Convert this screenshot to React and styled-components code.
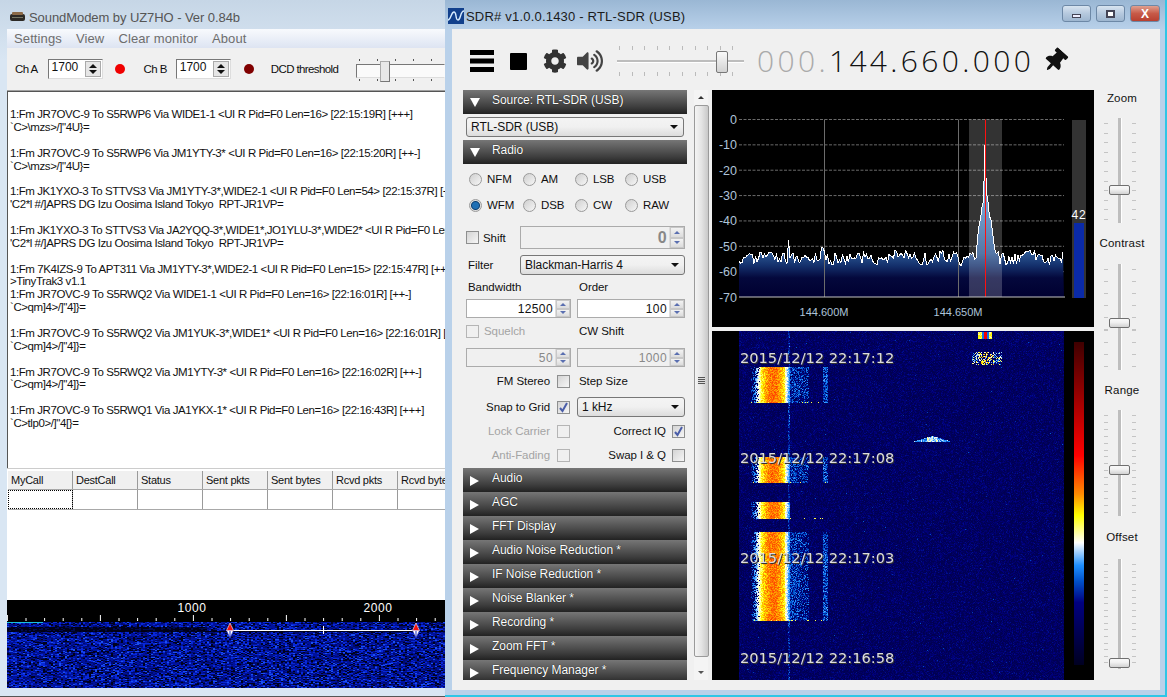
import { useEffect, useRef } from 'react';
import styled, { createGlobalStyle, css } from 'styled-components';
import { FaCog, FaVolumeUp, FaThumbtack } from 'react-icons/fa';

const GlobalStyle = createGlobalStyle`
  html, body { margin: 0; padding: 0; background: #b9d1ea; overflow: hidden; }
  * { box-sizing: border-box; }
  body { font-family: "Liberation Sans", Arial, sans-serif; font-size: 12px; color: #111; }
`;

/* helpers for the generated noise pictures */
const rng = (seed) => () => {
  seed |= 0; seed = (seed + 0x6d2b79f5) | 0;
  let t = Math.imul(seed ^ (seed >>> 15), 1 | seed);
  t = (t + Math.imul(t ^ (t >>> 7), 61 | t)) ^ t;
  return ((t ^ (t >>> 14)) >>> 0) / 4294967296;
};

const STOPS = [
  [0, [0, 0, 32]], [0.195, [0, 0, 128]], [0.26, [0, 80, 200]], [0.31, [30, 144, 255]],
  [0.38, [255, 255, 255]], [0.465, [255, 255, 0]], [0.53, [255, 140, 0]], [0.65, [255, 0, 0]],
  [0.85, [144, 0, 0]], [1, [64, 0, 0]],
];

const colorAt = (v) => {
  const c = Math.max(0, Math.min(1, v));
  for (let i = 1; i < STOPS.length; i++) {
    if (c <= STOPS[i][0]) {
      const [a, ca] = STOPS[i - 1];
      const [b, cb] = STOPS[i];
      const k = (c - a) / (b - a);
      return ca.map((n, j) => Math.round(n + (cb[j] - n) * k));
    }
  }
  return [64, 0, 0];
};

const BURSTS = [
  { y0: 36, y1: 72, full: true },
  { y0: 126, y1: 152, full: true },
  { y0: 171, y1: 188, full: false },
  { y0: 201, y1: 290, full: true },
];

const drawWaterfall = (ctx, w, h) => {
  const r = rng(1430);
  ctx.fillStyle = '#000';
  ctx.fillRect(0, 0, w, h);
  const img = ctx.createImageData(w, h);
  for (let y = 0; y < h; y++) {
    for (let x = 0; x < w; x++) {
      let rgb = [0, 0, 0];
      if (x >= 27 && x < 352) {
        const n = r();
        let v = 0.1 + n * n * 0.11;
        if (r() > 0.996) v += 0.06;
        if (x === 77 || x === 76) v += r() * 0.1 + 0.03;
        BURSTS.forEach((b) => {
          if (y < b.y0 || y >= b.y1) return;
          const a = x + 712;
          if (a >= 761 && a < 785) v = 0.41 + 0.1 * Math.sin(((a - 761) / 24) * Math.PI) + r() * 0.09;
          else if (a >= 751 && a < 761) v = r() < (a - 749) / 11 ? 0.22 + ((a - 751) / 9) * 0.17 + r() * 0.06 : v;
          else if (a >= 785 && a < 790) v = 0.37 - (a - 785) * 0.025 + r() * 0.07;
          else if (b.full && a >= 790 && a < 809) v = r() < 0.82 - (a - 790) * 0.02 ? 0.18 + r() * 0.14 : v;
          else if (b.full && a >= 823 && a < 828) v = r() < 0.8 ? 0.2 + r() * 0.13 : v;
          if (y === b.y1 - 1 && a >= 750 && a < 828 && r() < 0.15) v = 0.44;
        });
        const a = x + 712;
        if (y < 8 && a >= 978 && a < 992) {
          const band = a - 978;
          v = band < 4 || band > 10 ? 0.4 + r() * 0.08 : band < 6 || band > 8 ? 0.29 : 0.66;
          if (y < 1) v = 0.15;
        }
        if (y >= 21 && y < 34 && a >= 972 && a < 1002 && r() < 0.5) {
          v = 0.25 + r() * 0.2 + (a > 978 && a < 994 ? 0.08 : 0);
        }
        const dome = 4.5 - Math.abs(a - 932) / 3.4;
        if (y >= 104 && y < 111 && 111 - y < dome + 2 && a >= 914 && a < 950) {
          v = 0.26 + r() * 0.11 + (Math.abs(a - 932) < 6 ? 0.05 : 0);
        }
        rgb = colorAt(v);
      }
      if (x >= 362 && x < 372 && y >= 11 && y < 334) {
        rgb = colorAt(1 - (y - 11) / 323);
      }
      const i = (y * w + x) * 4;
      img.data[i] = rgb[0];
      img.data[i + 1] = rgb[1];
      img.data[i + 2] = rgb[2];
      img.data[i + 3] = 255;
    }
  }
  ctx.putImageData(img, 0, 0);
};

const drawAudioFall = (ctx, w, h) => {
  const r = rng(84);
  for (let y = 0; y < h; y++) {
    for (let x = 0; x < w; x += 2) {
      const n = r();
      let c = '#00129c';
      if (n < 0.2) c = '#00021e';
      else if (n < 0.42) c = '#000a70';
      else if (n > 0.93) c = '#1c50f0';
      else if (n > 0.74) c = '#0828d8';
      if (y === 0 && x < 35) c = '#18c0e0';
      if (y >= 5 && y < 9 && x < 200) c = n > 0.7 ? '#000a50' : '#000018';
      if (y === 9) c = n > 0.5 ? '#000010' : '#000428';
      ctx.fillStyle = c;
      ctx.fillRect(x, y, 2, 1);
    }
  }
};

const NoisePicture = ({ width, height, draw, className }) => {
  const ref = useRef(null);
  useEffect(() => {
    draw(ref.current.getContext('2d'), width, height);
  }, [width, height, draw]);
  return <canvas ref={ref} width={width} height={height} className={className} />;
};

const Desktop = styled.div`
  display: flex;
  width: 1167px;
  height: 697px;
  overflow: hidden;
`;

/* ------- SoundModem window ------- */
const ModemWindow = styled.div`
  width: 445px;
  height: 697px;
  flex: none;
  display: flex;
  flex-direction: column;
  padding-left: 7px;
  background: linear-gradient(#c6d6e6, #d9e6f3 60px, #d9e6f3);
  border-bottom: 1px solid #555;
  overflow: hidden;
`;

const ModemTitle = styled.div`
  height: 29px;
  margin-left: -7px;
  padding: 5px 0 0 10px;
  display: flex;
  align-items: center;
  gap: 4px;
  font-size: 13px;
  letter-spacing: -0.07px;
  color: #555;
  flex: none;
`;

const ModemMenu = styled.div`
  height: 19px;
  display: flex;
  gap: 14px;
  padding-left: 7px;
  align-items: center;
  font-size: 13px;
  letter-spacing: 0.12px;
  color: #6d6d6d;
  background: linear-gradient(#f8fafd, #dde4f2);
  flex: none;
`;

const ModemBar = styled.div`
  height: 43px;
  background: #f0f0f0;
  display: flex;
  align-items: center;
  flex: none;
  position: relative;
  border-bottom: 1px solid #a0a0a0;
`;

const BarLabel = styled.span`
  font-size: 11.5px;
  letter-spacing: -0.6px;
  margin-left: ${(p) => p.$left}px;
`;

const ChannelInput = styled.div`
  width: 55px;
  height: 20px;
  margin-left: ${(p) => p.$left}px;
  background: #fff;
  border: 1px solid;
  border-color: #777 #ddd #ddd #777;
  display: flex;
  justify-content: space-between;
  font-size: 12px;
  padding: 0 0 0 3px;
  line-height: 15px;
`;

const ArrowPair = styled.div`
  width: 16px;
  margin: 1px 1px 1px 0;
  background: #e6e6e6;
  border: 1px solid #aaa;
  display: flex;
  flex-direction: column;
  align-items: center;
  justify-content: space-evenly;
`;

const Arrow = styled.i`
  width: 0;
  height: 0;
  border-left: ${(p) => p.$size || 4}px solid transparent;
  border-right: ${(p) => p.$size || 4}px solid transparent;
  ${(p) => (p.$down
    ? css`border-top: ${p.$size || 4}px solid ${p.$color || '#111'};`
    : css`border-bottom: ${p.$size || 4}px solid ${p.$color || '#111'};`)}
`;

const Led = styled.span`
  width: 10px;
  height: 10px;
  border-radius: 50%;
  margin-left: ${(p) => p.$left}px;
  background: ${(p) => p.$color};
`;

const DcdSlider = styled.div`
  position: absolute;
  left: 349px;
  right: 0;
  top: 11px;
  height: 22px;
  background:
    repeating-linear-gradient(to right, #555 0 1px, transparent 1px 18px) 3px 0 / 100% 2px no-repeat,
    repeating-linear-gradient(to right, #555 0 1px, transparent 1px 18px) 3px 20px / 100% 2px no-repeat;

  &::before {
    content: '';
    position: absolute;
    left: 0;
    right: 0;
    top: 5px;
    height: 12px;
    background: #fafafa;
    border: 1px solid;
    border-color: #777 transparent #ddd #777;
  }
  &::after {
    content: '';
    position: absolute;
    left: 24px;
    top: 2px;
    width: 8px;
    height: 19px;
    background: #e8e8e8;
    border: 1px solid #aaa;
    border-right-color: #777;
    border-bottom-color: #777;
  }
`;

const Monitor = styled.div`
  height: 377px;
  background: #fff;
  border: 1px solid #555;
  border-width: 1px 0 0 1px;
  padding: 16px 0 0 2px;
  font-size: 11.5px;
  line-height: 12.87px;
  letter-spacing: -0.42px;
  white-space: pre;
  overflow: hidden;
  flex: none;
`;

const PeerGrid = styled.div`
  height: 132px;
  background: #fff;
  padding-top: 2px;
  flex: none;
  border-top: 1px solid #ccc;
`;

const PeerRow = styled.div`
  display: grid;
  grid-template-columns: repeat(7, 65px);
  height: ${(p) => p.$height}px;
  margin-left: 1px;
  ${(p) => p.$head && css`background: #f0f0f0;`}
  border-bottom: 1px solid #a8a8a8;
`;

const PeerCell = styled.div`
  border-right: 1px solid #9a9a9a;
  padding: 3px 0 0 3px;
  font-size: 11px;
  letter-spacing: -0.25px;
  overflow: hidden;
  white-space: nowrap;
  ${(p) => p.$focus && css`outline: 1px dotted #000; outline-offset: -1px;`}
`;

const Ruler = styled.svg`
  display: block;
  flex: none;
  background: #000;
`;

const RulerText = styled.text`
  font-size: 12px;
  letter-spacing: 0.6px;
  fill: #fff;
`;

const AudioFall = styled.div`
  position: relative;
  height: 66px;
  flex: none;
  canvas { display: block; }
`;

const TuneMarks = styled.svg`
  position: absolute;
  left: 0;
  top: 0;
`;

const ModemFooter = styled.div`
  flex: 1;
  background: #d9e6f3;
`;

/* ------- SDR# window ------- */
const SdrWindow = styled.div`
  width: 722px;
  height: 697px;
  flex: none;
  display: flex;
  flex-direction: column;
  padding: 0 2px 2px 7px;
  position: relative;
  background: linear-gradient(#9ab7d4, #b9d1ea 30px);
  border-bottom: 2px solid #2fc6e6;
  border-right: 0;
  box-shadow: inset -2px 0 0 #2fc6e6;
`;

const SdrTitle = styled.div`
  height: 29px;
  display: flex;
  align-items: center;
  margin-left: -4px;
  padding-top: 3px;
  gap: 2px;
  font-size: 13px;
  letter-spacing: 0.2px;
  color: #1b1b1b;
  flex: none;
`;

const Caption = styled.div`
  margin-left: auto;
  margin-right: 5px;
  display: flex;
  gap: 5px;
  padding-bottom: 5px;
`;

const CaptionButton = styled.div`
  width: ${(p) => (p.$close ? 30 : 29)}px;
  height: 17px;
  border: 1px solid #6d88a6;
  border-radius: 3px;
  display: flex;
  align-items: center;
  justify-content: center;
  color: #fff;
  font-weight: bold;
  font-size: 12px;
  background: ${(p) => (p.$close
    ? 'linear-gradient(#e0a090, #c75a48 50%, #b84030)'
    : 'linear-gradient(#d8e4f0, #b6c9de 50%, #9eb6d0)')};
`;

const MinGlyph = styled.i`
  width: 9px;
  height: 4px;
  margin-top: 4px;
  background: #eef;
  border: 1px solid #445;
`;

const MaxGlyph = styled.i`
  width: 9px;
  height: 8px;
  background: #fff;
  border: 2px solid #445;
`;

const SdrClient = styled.div`
  width: 708px;
  height: 661px;
  background: #f0f0f0;
  display: flex;
  flex-direction: column;
  flex: none;
`;

const SdrBar = styled.div`
  height: 61px;
  flex: none;
  display: flex;
  align-items: center;
  padding: 3px 0 0 18px;
`;

const ToolIcon = styled.span`
  display: flex;
  margin-left: ${(p) => p.$left}px;
  color: ${(p) => p.$color};
`;

const VolumeSlider = styled.div`
  position: relative;
  width: 127px;
  height: 30px;
  margin-left: 14px;
  background:
    repeating-linear-gradient(to right, #bbb 0 1px, transparent 1px 12.6px) 2px 0 / 100% 4px no-repeat,
    repeating-linear-gradient(to right, #bbb 0 1px, transparent 1px 12.6px) 2px 26px / 100% 4px no-repeat;

  &::before {
    content: '';
    position: absolute;
    left: 0;
    right: 0;
    top: 14px;
    height: 2px;
    background: #bdbdbd;
    border-bottom: 1px solid #fff;
  }
  &::after {
    content: '';
    position: absolute;
    left: 99px;
    top: 5px;
    width: 10px;
    height: 20px;
    border: 1px solid #777;
    border-radius: 2px;
    background: linear-gradient(#fafafa, #d2d2d2);
  }
`;

const Frequency = styled.div`
  margin-left: 13px;
  font-family: "Open Sans", sans-serif;
  font-weight: 300;
  font-size: 30px;
  letter-spacing: 3.35px;
  line-height: 36px;
  color: #111;
  white-space: pre;
  span { color: #aaa; }
`;

const PinIcon = styled(FaThumbtack)`
  margin-left: 9px;
  width: 24px;
  height: 24px;
  transform: rotate(42deg);
  color: #111;
`;

const SdrMain = styled.div`
  display: flex;
  height: 590px;
  flex: none;
  padding-left: 11px;
`;

const SidePanel = styled.div`
  width: 224px;
  flex: none;
  overflow: hidden;
`;

const PanelHead = styled.div`
  height: 24px;
  display: flex;
  align-items: center;
  padding: 0 0 5px 29px;
  position: relative;
  font-size: 12px;
  letter-spacing: -0.05px;
  color: #fff;
  background: linear-gradient(#767676, #3e3e3e 70%, #222);
  text-shadow: 0 0 1px #000;
  &::before {
    content: '';
    position: absolute;
    left: 7px;
    top: 8px;
    ${(p) => (p.$open
    ? css`border-left: 5px solid transparent; border-right: 5px solid transparent; border-top: 9px solid #fff;`
    : css`border-top: 5px solid transparent; border-bottom: 5px solid transparent; border-left: 9px solid #fff;`)}
  }
`;

const DropDown = styled.div`
  width: ${(p) => p.$width}px;
  height: ${(p) => p.$height || 20}px;
  border: 1px solid #777;
  border-radius: 3px;
  margin-left: ${(p) => p.$left || 0}px;
  display: flex;
  align-items: center;
  justify-content: space-between;
  padding: 0 5px 0 4px;
  font-size: 12px;
  letter-spacing: -0.05px;
  background: linear-gradient(#f4f4f4, #f0f0f0 50%, #dcdcdc);
  flex: none;
`;

const SourceBody = styled.div`
  height: 26px;
  padding: 3px 0 0 3px;
`;

const RadioForm = styled.div`
  display: grid;
  grid-template-columns: 54px 52px 50px 60px;
  grid-auto-rows: 26px;
  margin: 2px 0 8px 6px;
`;

const RadioItem = styled.label`
  display: flex;
  align-items: center;
  gap: 5px;
  letter-spacing: -0.1px;
  font-size: 11.5px;
`;

const RadioDot = styled.i`
  width: 13px;
  height: 13px;
  border-radius: 50%;
  border: 1px solid #9a9a9a;
  flex: none;
  background: ${(p) => (p.$on
    ? 'radial-gradient(circle, #1f6fb4 0 3px, #0d3f72 4px, #ddd 5px)'
    : 'linear-gradient(135deg, #cfcfcf, #f6f6f6)')};
`;

const FormRow = styled.div`
  display: flex;
  align-items: center;
  height: ${(p) => p.$height}px;
  margin-top: ${(p) => p.$top || 0}px;
  padding-left: ${(p) => p.$left ?? 3}px;
`;

const Half = styled.div`
  width: ${(p) => p.$width}px;
  flex: none;
  display: flex;
  align-items: center;
  justify-content: ${(p) => (p.$end ? 'flex-end' : 'flex-start')};
  gap: ${(p) => p.$gap ?? 7}px;
`;

const FieldLabel = styled.span`
  font-size: 11.5px;
  letter-spacing: -0.05px;
  white-space: nowrap;
  color: ${(p) => (p.$off ? '#a4a4a4' : '#111')};
  margin-left: ${(p) => p.$left || 0}px;
`;

const CheckBox = styled.span`
  width: 13px;
  height: 13px;
  flex: none;
  border: 1px solid #8e8f8f;
  background: ${(p) => (p.$off ? '#f0f0f0' : 'linear-gradient(135deg, #d4d4d4, #f6f6f6)')};
  display: flex;
  align-items: center;
  justify-content: center;
  ${(p) => p.$off && css`border-color: #b5b5b5;`}
  svg { display: block; }
`;

const NumberBox = styled.div`
  width: ${(p) => p.$width}px;
  height: ${(p) => p.$height || 19}px;
  border: 1px solid #ababab;
  background: ${(p) => (p.$off ? '#f0f0f0' : '#fff')};
  display: flex;
  align-items: center;
  justify-content: flex-end;
  font-size: ${(p) => p.$size || 12}px;
  font-weight: ${(p) => (p.$bold ? 'bold' : 'normal')};
  letter-spacing: 0.4px;
  color: ${(p) => (p.$off ? '#888' : '#111')};
  margin-left: ${(p) => p.$left || 0}px;
  flex: none;
`;

const SpinPair = styled.div`
  width: 15px;
  height: 100%;
  margin-left: 2px;
  display: flex;
  flex-direction: column;
  border-left: 1px solid #ddd;
`;

const SpinButton = styled.div`
  flex: 1;
  display: flex;
  align-items: center;
  justify-content: center;
  background: linear-gradient(#f2f2f2, #dcdcdc);
  border: 1px solid #c8c8c8;
`;

const PanelGap = styled.div`
  height: 6px;
`;

const ScrollBar = styled.div`
  width: 14px;
  margin-left: 7px;
  flex: none;
  display: flex;
  flex-direction: column;
  align-items: center;
  justify-content: space-between;
  background: #f4f4f4;
  padding: 6px 0 6px;
`;

const ScrollThumb = styled.div`
  flex: 1;
  width: 15px;
  margin: 6px 0 14px;
  border: 1px solid #9a9a9a;
  border-radius: 2px;
  background: linear-gradient(to right, #f4f4f4, #e4e4e4 50%, #c8c8c8);
  display: flex;
  align-items: center;
  justify-content: center;
`;

const Grip = styled.i`
  width: 7px;
  height: 7px;
  margin-bottom: 2px;
  background: repeating-linear-gradient(#555 0 1px, #ddd 1px 2px);
`;

const Display = styled.div`
  width: 382px;
  margin-left: 4px;
  flex: none;
  display: flex;
  flex-direction: column;
  gap: 4px;
`;

const SpectrumBox = styled.svg`
  display: block;
  background: #000;
  flex: none;
`;

const AxisText = styled.text`
  font-family: "Liberation Sans", sans-serif;
  font-size: ${(p) => p.$size}px;
  fill: #aec3d9;
`;

const MeterText = styled.text`
  font-family: "Liberation Sans", sans-serif;
  font-size: 12px;
  letter-spacing: 0.8px;
  fill: #fff;
`;

const WaterBox = styled.div`
  position: relative;
  height: 349px;
  flex: none;
  canvas { display: block; }
`;

const Stamp = styled.div`
  position: absolute;
  left: 28px;
  top: ${(p) => p.$top}px;
  font-family: "DejaVu Sans", sans-serif;
  font-size: 14.6px;
  letter-spacing: 0;
  line-height: 18px;
  color: #ddd;
  text-shadow: 1px 1px 0 #333;
  white-space: nowrap;
`;

const SliderColumn = styled.div`
  flex: 1;
  padding-right: 14px;
  display: flex;
  flex-direction: column;
`;

const SliderBlock = styled.div`
  height: ${(p) => p.$height}px;
  display: flex;
  flex-direction: column;
  align-items: center;
  flex: none;
`;

const SliderName = styled.div`
  height: 16px;
  font-size: 11.5px;
  letter-spacing: 0.2px;
  line-height: 16px;
  margin-left: 4px;
  flex: none;
`;

const VTrack = styled.div`
  position: relative;
  width: 32px;
  height: ${(p) => p.$height}px;
  margin-top: ${(p) => p.$gap}px;
  flex: none;
  --s: ${(p) => p.$step}px;
  background:
    repeating-linear-gradient(#c4c4c4 0 1px, transparent 1px var(--s)) 0 5px / 4px 100% no-repeat,
    repeating-linear-gradient(#c4c4c4 0 1px, transparent 1px var(--s)) 28px 5px / 4px 100% no-repeat;

  &::before {
    content: '';
    position: absolute;
    left: 14px;
    top: 0;
    bottom: 0;
    width: 3px;
    background: #bdbdbd;
    border-right: 1px solid #fff;
  }
`;

const VThumb = styled.div`
  position: absolute;
  left: 5px;
  top: ${(p) => p.$top}px;
  width: 21px;
  height: 10px;
  border: 1px solid #6f6f6f;
  border-radius: 2px;
  background: linear-gradient(#f8f8f8, #f2f2f2 40%, #d2d2d2);
`;

const LOG = `1:Fm JR7OVC-9 To S5RWP6 Via WIDE1-1 <UI R Pid=F0 Len=16> [22:15:19R] [+++]
\`C>\\mzs>/]"4U}=

1:Fm JR7OVC-9 To S5RWP6 Via JM1YTY-3* <UI R Pid=F0 Len=16> [22:15:20R] [++-]
\`C>\\mzs>/]"4U}=

1:Fm JK1YXO-3 To STTVS3 Via JM1YTY-3*,WIDE2-1 <UI R Pid=F0 Len=54> [22:15:37R] [+++]
'C2*l #/]APRS DG Izu Oosima Island Tokyo  RPT-JR1VP=

1:Fm JK1YXO-3 To STTVS3 Via JA2YQQ-3*,WIDE1*,JO1YLU-3*,WIDE2* <UI R Pid=F0 Len=54>
'C2*l #/]APRS DG Izu Oosima Island Tokyo  RPT-JR1VP=

1:Fm 7K4IZS-9 To APT311 Via JM1YTY-3*,WIDE2-1 <UI R Pid=F0 Len=15> [22:15:47R] [+++]
>TinyTrak3 v1.1
1:Fm JR7OVC-9 To S5RWQ2 Via WIDE1-1 <UI R Pid=F0 Len=16> [22:16:01R] [++-]
\`C>qm]4>/]"4]}=

1:Fm JR7OVC-9 To S5RWQ2 Via JM1YUK-3*,WIDE1* <UI R Pid=F0 Len=16> [22:16:01R] [+++]
\`C>qm]4>/]"4]}=

1:Fm JR7OVC-9 To S5RWQ2 Via JM1YTY-3* <UI R Pid=F0 Len=16> [22:16:02R] [++-]
\`C>qm]4>/]"4]}=

1:Fm JR7OVC-9 To S5RWQ1 Via JA1YKX-1* <UI R Pid=F0 Len=16> [22:16:43R] [+++]
\`C>tlp0>/]"4[}=`;

const PEER_COLUMNS = ['MyCall', 'DestCall', 'Status', 'Sent pkts', 'Sent bytes', 'Rcvd pkts', 'Rcvd bytes'];
const COLLAPSED = ['Audio', 'AGC', 'FFT Display', 'Audio Noise Reduction *', 'IF Noise Reduction *', 'Noise Blanker *', 'Recording *', 'Zoom FFT *', 'Frequency Manager *'];

const dbY = (db) => 29.5 + (-db / 70) * 177.5;

const buildTrace = () => {
  const r = rng(60);
  const pts = [];
  for (let x = 27; x <= 352; x += 1.5) {
    const a = x + 712;
    let db = -54.5 + (r() - 0.5) * 5 + Math.sin(x / 7) * 0.7;
    if (Math.abs(a - 788) < 1) db = -47.5;
    if (Math.abs(a - 822) < 2) db = -50.5;
    const d = Math.abs(a - 985.5);
    if (d < 13) {
      let peak = -55;
      if (d < 1) peak = -10;
      else if (d < 2) peak = -29;
      else if (d < 4) peak = -32 - (d - 2) * 1.5;
      else if (d < 6.5) peak = -38 - (d - 4) * 1;
      else if (d < 9) peak = -42 - (d - 6.5) * 3.5;
      db = Math.max(db, peak + (d > 1 ? (r() - 0.5) * 1.2 : 0));
    }
    pts.push([x, dbY(db)]);
  }
  return pts;
};

const Spectrum = () => {
  const pts = buildTrace();
  const line = pts.map((p, i) => `${i ? 'L' : 'M'}${p[0]} ${p[1].toFixed(1)}`).join(' ');
  const area = `${line} L352 207 L27 207 Z`;
  return (
    <SpectrumBox width="382" height="237">
      <defs>
        <linearGradient id="specFill" gradientUnits="userSpaceOnUse" x1="0" y1="120" x2="0" y2="207">
          <stop offset="0" stopColor="#4f86c0" />
          <stop offset="0.5" stopColor="#2a5590" />
          <stop offset="0.64" stopColor="#14306c" />
          <stop offset="0.78" stopColor="#04083c" />
          <stop offset="1" stopColor="#000030" />
        </linearGradient>
      </defs>
      {[0, -10, -20, -30, -40, -50, -60, -70].map((db) => (
        <g key={db}>
          <AxisText $size={12.5} x="25" y={dbY(db) + 4.5} textAnchor="end">{db}</AxisText>
          {db !== -70 && (
            <line x1="27" x2="352" y1={dbY(db)} y2={dbY(db)} stroke="#6a6a6a" strokeDasharray="3 1.5" />
          )}
        </g>
      ))}
      <path d={area} fill="url(#specFill)" />
      <rect x="257" y="29.5" width="33" height="177.5" fill="#fff" opacity="0.2" />
      <line x1="112.5" x2="112.5" y1="29.5" y2="207" stroke="#6c6c6c" />
      <line x1="246.5" x2="246.5" y1="29.5" y2="207" stroke="#6c6c6c" />
      <path d={line} fill="none" stroke="#fff" strokeWidth="1" shapeRendering="crispEdges" />
      <line x1="273.5" x2="273.5" y1="29.5" y2="207" stroke="#ff1010" />
      <line x1="27" x2="353" y1="207" y2="207" stroke="#c4c4c4" />
      <AxisText $size={11} x="112" y="226" textAnchor="middle">144.600M</AxisText>
      <AxisText $size={11} x="246" y="226" textAnchor="middle">144.650M</AxisText>
      <rect x="360" y="30" width="14" height="178" fill="#333" />
      <rect x="362" y="133" width="10" height="75" fill="#0a2aa8" />
      <MeterText x="367" y="129" textAnchor="middle">42</MeterText>
    </SpectrumBox>
  );
};

const Spin = () => (
  <SpinPair>
    <SpinButton><Arrow $size={3} $color="#5a6fb0" /></SpinButton>
    <SpinButton><Arrow $size={3} $down $color="#5a6fb0" /></SpinButton>
  </SpinPair>
);

const Tick = () => (
  <svg width="11" height="11" viewBox="0 0 11 11">
    <path d="M2 6 L4.5 9 L9 1" fill="none" stroke="#4a5da8" strokeWidth="2" />
  </svg>
);

const Slider = ({ name, blockHeight, height, gap, step, top }) => (
  <SliderBlock $height={blockHeight}>
    <SliderName>{name}</SliderName>
    <VTrack $height={height} $gap={gap} $step={step}>
      <VThumb $top={top} />
    </VTrack>
  </SliderBlock>
);

export default function App() {
  const ticks = [];
  for (let i = 0; i < 24; i++) {
    const x = 0.4 + i * 18.6;
    ticks.push(<line key={i} x1={x} x2={x} y1={i % 5 === 0 ? 15 : 18} y2="21" stroke="#fff" />);
  }

  return (
    <Desktop>
      <GlobalStyle />

      <ModemWindow>
        <ModemTitle>
          <svg width="15" height="10" viewBox="0 0 15 10">
            <rect x="0" y="2" width="15" height="7" rx="2" fill="#2d2a26" />
            <rect x="2" y="0" width="11" height="3" rx="1" fill="#8c6a48" />
            <rect x="2" y="5" width="11" height="1" fill="#776" />
          </svg>
          SoundModem by UZ7HO - Ver 0.84b
        </ModemTitle>
        <ModemMenu>
          <span>Settings</span>
          <span>View</span>
          <span>Clear monitor</span>
          <span>About</span>
        </ModemMenu>
        <ModemBar>
          <BarLabel $left={8}>Ch A</BarLabel>
          <ChannelInput $left={10}>
            1700
            <ArrowPair><Arrow /><Arrow $down /></ArrowPair>
          </ChannelInput>
          <Led $color="#f00000" $left={12} />
          <BarLabel $left={19}>Ch B</BarLabel>
          <ChannelInput $left={9}>
            1700
            <ArrowPair><Arrow /><Arrow $down /></ArrowPair>
          </ChannelInput>
          <Led $color="#800000" $left={13} />
          <BarLabel $left={17}>DCD threshold</BarLabel>
          <DcdSlider />
        </ModemBar>
        <Monitor>{LOG}</Monitor>
        <PeerGrid>
          <PeerRow $head $height={19}>
            {PEER_COLUMNS.map((c) => <PeerCell key={c}>{c}</PeerCell>)}
          </PeerRow>
          <PeerRow $height={20}>
            {PEER_COLUMNS.map((c, i) => <PeerCell key={c} $focus={i === 0} />)}
          </PeerRow>
        </PeerGrid>
        <Ruler width="438" height="22">
          <RulerText x="185" y="12" textAnchor="middle">1000</RulerText>
          <RulerText x="371" y="12" textAnchor="middle">2000</RulerText>
          {ticks}
        </Ruler>
        <AudioFall>
          <NoisePicture width={438} height={66} draw={drawAudioFall} />
          <TuneMarks width="438" height="30">
            <line x1="223" x2="409" y1="8.5" y2="8.5" stroke="#fff" />
            <line x1="316.5" x2="316.5" y1="4" y2="12" stroke="#fff" />
            {[223, 409].map((x) => (
              <g key={x}>
                <path d={`M${x} 8.5 L${x} 16 L${x + 3.5} 8.5 Z M${x} 8.5 L${x} 16 L${x - 3.5} 8.5 Z`} fill="#fff" stroke="#2030c0" strokeWidth="0.6" />
                <path d={`M${x} 1 L${x + 3.5} 8.5 L${x - 3.5} 8.5 Z`} fill="#f01010" stroke="#fff" strokeWidth="0.6" />
              </g>
            ))}
          </TuneMarks>
        </AudioFall>
        <ModemFooter />
      </ModemWindow>

      <SdrWindow>
        <SdrTitle>
          <svg width="16" height="16" viewBox="0 0 16 16">
            <rect width="16" height="16" fill="#12408c" />
            <path d="M0 12 C3 12 3 4 6 4 C9 4 7 12 10 12 C13 12 12 3 16 3" fill="none" stroke="#d8ecff" strokeWidth="1.4" />
          </svg>
          SDR# v1.0.0.1430 - RTL-SDR (USB)
          <Caption>
            <CaptionButton><MinGlyph /></CaptionButton>
            <CaptionButton><MaxGlyph /></CaptionButton>
            <CaptionButton $close>X</CaptionButton>
          </Caption>
        </SdrTitle>
        <SdrClient>
          <SdrBar>
            <svg width="24" height="22" viewBox="0 0 24 22">
              <rect y="0" width="24" height="5" fill="#000" />
              <rect y="8.5" width="24" height="5" fill="#000" />
              <rect y="17" width="24" height="5" fill="#000" />
            </svg>
            <ToolIcon $left={16}>
              <svg width="17" height="17" viewBox="0 0 17 17">
                <rect width="17" height="17" rx="1" fill="#000" />
              </svg>
            </ToolIcon>
            <ToolIcon $left={16} $color="#333"><FaCog size={24} /></ToolIcon>
            <ToolIcon $left={10} $color="#444"><FaVolumeUp size={26} /></ToolIcon>
            <VolumeSlider />
            <Frequency><span>000.</span>144.660.000</Frequency>
            <PinIcon />
          </SdrBar>
          <SdrMain>
            <SidePanel>
              <PanelHead $open>Source: RTL-SDR (USB)</PanelHead>
              <SourceBody>
                <DropDown $width={218}>RTL-SDR (USB)<Arrow $down /></DropDown>
              </SourceBody>
              <PanelHead $open>Radio</PanelHead>
              <RadioForm>
                {['NFM', 'AM', 'LSB', 'USB', 'WFM', 'DSB', 'CW', 'RAW'].map((m) => (
                  <RadioItem key={m}><RadioDot $on={m === 'WFM'} />{m}</RadioItem>
                ))}
              </RadioForm>
              <FormRow $height={23}>
                <Half $width={54} $gap={4}>
                  <CheckBox />
                  <FieldLabel>Shift</FieldLabel>
                </Half>
                <NumberBox $width={165} $height={23} $off $bold $size={16}>0<Spin /></NumberBox>
              </FormRow>
              <FormRow $height={20} $top={6} $left={5}>
                <Half $width={52}><FieldLabel>Filter</FieldLabel></Half>
                <DropDown $width={165}>Blackman-Harris 4<Arrow $down /></DropDown>
              </FormRow>
              <FormRow $height={14} $top={5} $left={5}>
                <Half $width={111}><FieldLabel>Bandwidth</FieldLabel></Half>
                <FieldLabel>Order</FieldLabel>
              </FormRow>
              <FormRow $height={19} $top={5}>
                <NumberBox $width={105}>12500<Spin /></NumberBox>
                <NumberBox $width={108} $left={6}>100<Spin /></NumberBox>
              </FormRow>
              <FormRow $height={14} $top={6}>
                <Half $width={113} $gap={5}><CheckBox $off /><FieldLabel $off>Squelch</FieldLabel></Half>
                <FieldLabel>CW Shift</FieldLabel>
              </FormRow>
              <FormRow $height={19} $top={10}>
                <NumberBox $width={105} $off>50<Spin /></NumberBox>
                <NumberBox $width={108} $left={6} $off>1000<Spin /></NumberBox>
              </FormRow>
              <FormRow $height={14} $top={7} $left={0}>
                <Half $width={107} $end><FieldLabel>FM Stereo</FieldLabel><CheckBox /></Half>
                <FieldLabel $left={9}>Step Size</FieldLabel>
              </FormRow>
              <FormRow $height={20} $top={9} $left={0}>
                <Half $width={107} $end><FieldLabel>Snap to Grid</FieldLabel><CheckBox><Tick /></CheckBox></Half>
                <DropDown $width={108} $left={7}>1 kHz<Arrow $down /></DropDown>
              </FormRow>
              <FormRow $height={14} $top={7} $left={0}>
                <Half $width={107} $end><FieldLabel $off>Lock Carrier</FieldLabel><CheckBox $off /></Half>
                <Half $width={115} $end $gap={6}><FieldLabel>Correct IQ</FieldLabel><CheckBox><Tick /></CheckBox></Half>
              </FormRow>
              <FormRow $height={14} $top={10} $left={0}>
                <Half $width={107} $end><FieldLabel $off>Anti-Fading</FieldLabel><CheckBox $off /></Half>
                <Half $width={115} $end $gap={6}><FieldLabel>Swap I &amp; Q</FieldLabel><CheckBox /></Half>
              </FormRow>
              <PanelGap />
              {COLLAPSED.map((t) => <PanelHead key={t}>{t}</PanelHead>)}
            </SidePanel>
            <ScrollBar>
              <Arrow $size={3} $color="#333" />
              <ScrollThumb><Grip /></ScrollThumb>
              <Arrow $size={3} $down $color="#555" />
            </ScrollBar>
            <Display>
              <Spectrum />
              <WaterBox>
                <NoisePicture width={382} height={349} draw={drawWaterfall} />
                <Stamp $top={18}>2015/12/12 22:17:12</Stamp>
                <Stamp $top={118}>2015/12/12 22:17:08</Stamp>
                <Stamp $top={218}>2015/12/12 22:17:03</Stamp>
                <Stamp $top={318}>2015/12/12 22:16:58</Stamp>
              </WaterBox>
            </Display>
            <SliderColumn>
              <Slider name="Zoom" blockHeight={145} height={105} gap={12} step={9.6} top={67} />
              <Slider name="Contrast" blockHeight={147} height={106} gap={13} step={12.1} top={54} />
              <Slider name="Range" blockHeight={147} height={106} gap={12} step={6.9} top={55} />
              <Slider name="Offset" blockHeight={140} height={110} gap={14} step={6.55} top={99} />
            </SliderColumn>
          </SdrMain>
        </SdrClient>
      </SdrWindow>
    </Desktop>
  );
}
